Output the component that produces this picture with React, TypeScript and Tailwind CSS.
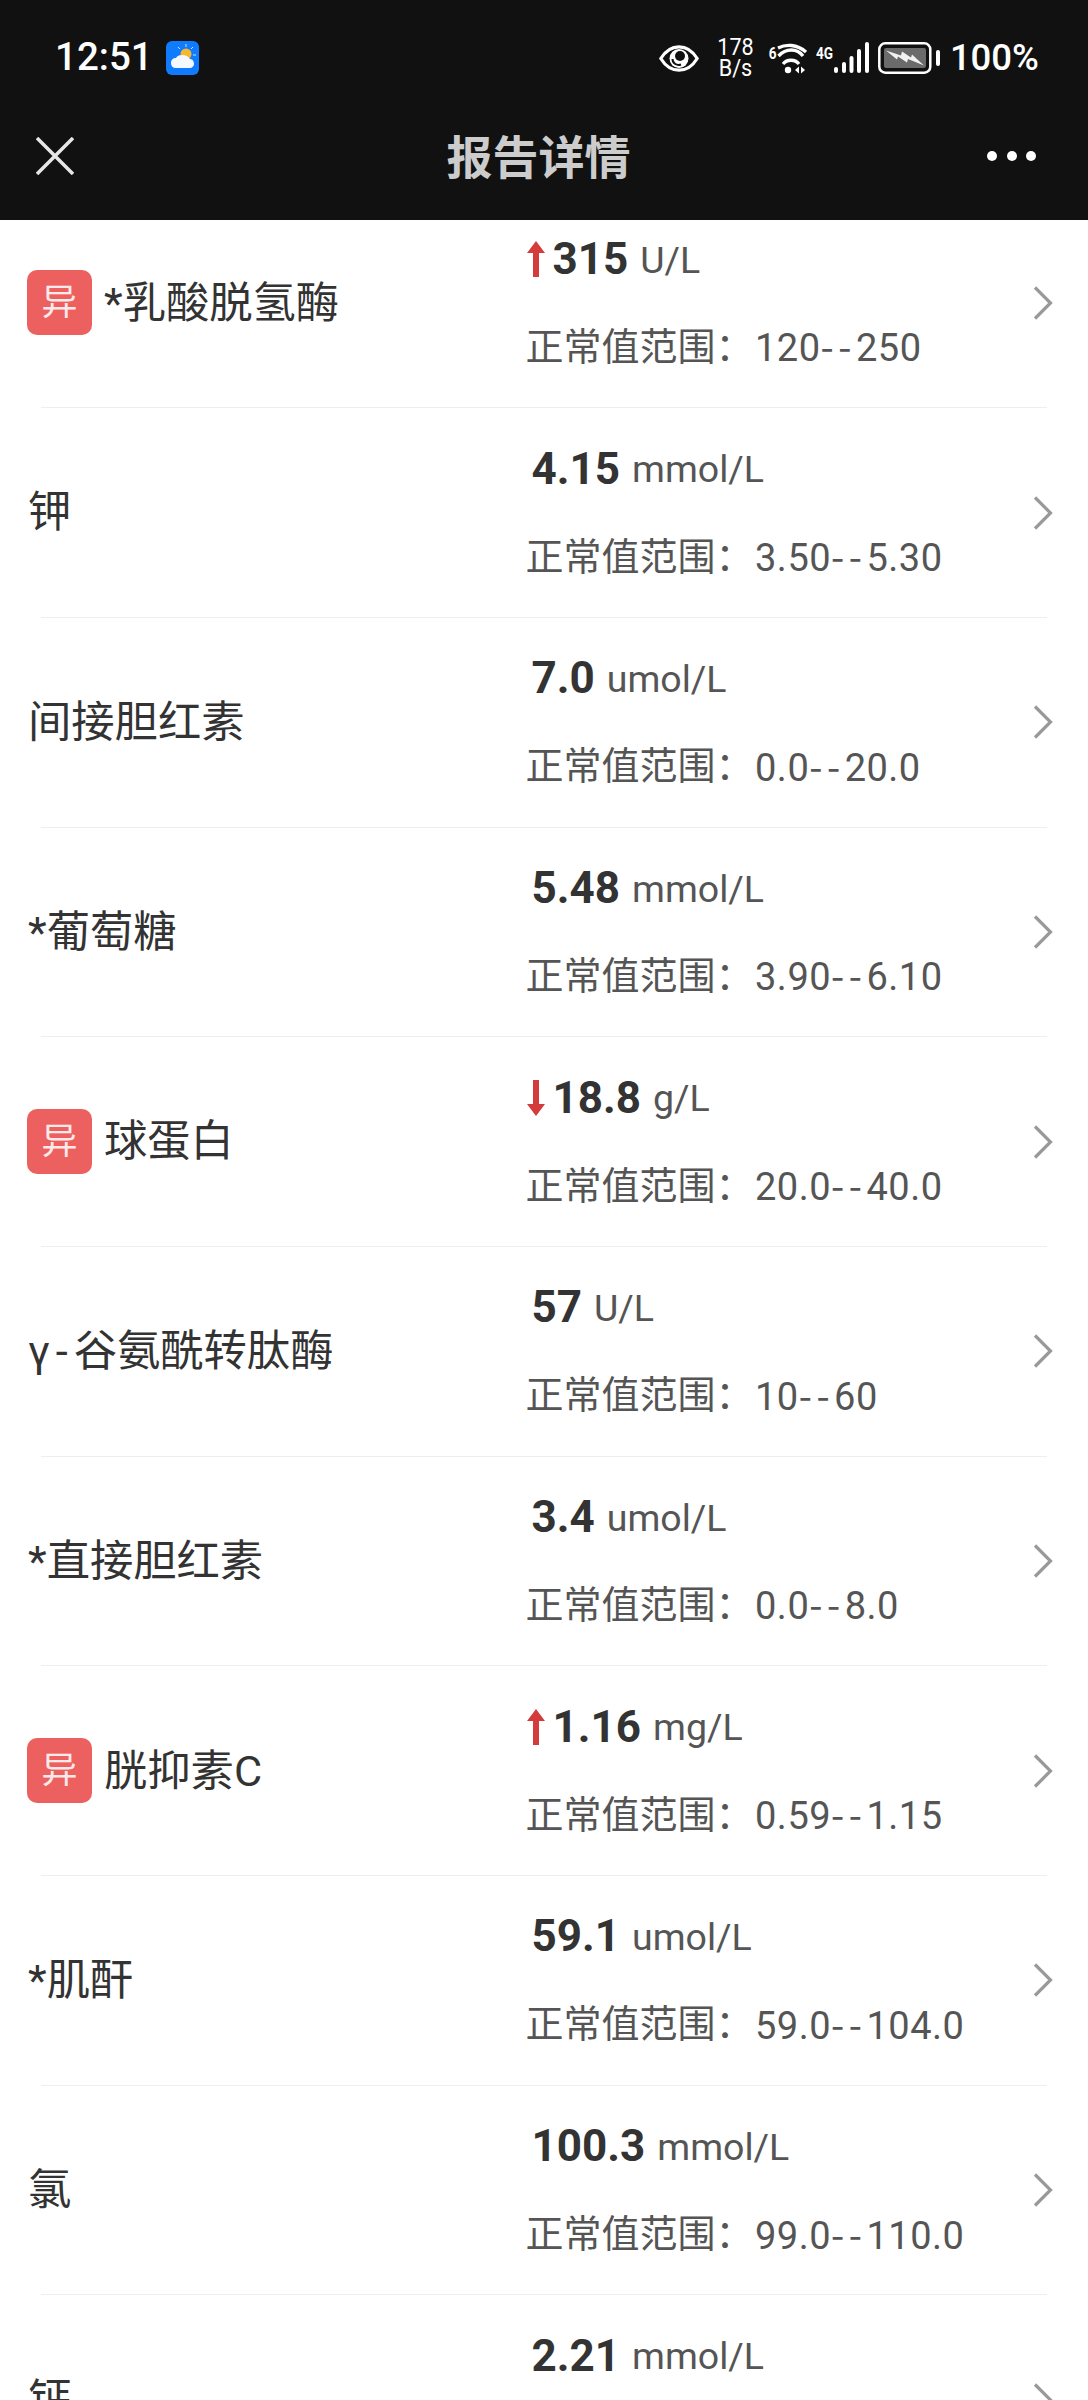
import React from "react";

type Row = { name: string; flag?: "up" | "down"; value: string; unit: string; range: string };

const rows: Row[] = [
  { name: "*乳酸脱氢酶", flag: "up", value: "315", unit: "U/L", range: "120--250" },
  { name: "钾", value: "4.15", unit: "mmol/L", range: "3.50--5.30" },
  { name: "间接胆红素", value: "7.0", unit: "umol/L", range: "0.0--20.0" },
  { name: "*葡萄糖", value: "5.48", unit: "mmol/L", range: "3.90--6.10" },
  { name: "球蛋白", flag: "down", value: "18.8", unit: "g/L", range: "20.0--40.0" },
  { name: "γ-谷氨酰转肽酶", value: "57", unit: "U/L", range: "10--60" },
  { name: "*直接胆红素", value: "3.4", unit: "umol/L", range: "0.0--8.0" },
  { name: "胱抑素C", flag: "up", value: "1.16", unit: "mg/L", range: "0.59--1.15" },
  { name: "*肌酐", value: "59.1", unit: "umol/L", range: "59.0--104.0" },
  { name: "氯", value: "100.3", unit: "mmol/L", range: "99.0--110.0" },
  { name: "钙", value: "2.21", unit: "mmol/L", range: "2.11--2.52" },
];

function Arrow({ dir }: { dir: "up" | "down" }) {
  return (
    <svg width="18" height="36" viewBox="0 0 18 36" className={dir === "down" ? "rotate-180" : ""}>
      <path d="M9 0 L18 12 L12 12 L12 36 L6 36 L6 12 L0 12 Z" fill="#d43b3b" />
    </svg>
  );
}

function Chevron() {
  return (
    <svg width="20" height="34" viewBox="0 0 20 34" fill="none">
      <path d="M2 1.500 L17.500 17 L2 32.500" stroke="#999999" strokeWidth="3.200" />
    </svg>
  );
}

function RowName({ name }: { name: string }) {
  if (name.startsWith("γ-")) {
    return (
      <>
        <span className="tracking-[6px]">γ-</span>
        {name.slice(2)}
      </>
    );
  }
  return <>{name}</>;
}

function Range({ range }: { range: string }) {
  const [a, b] = range.split("--");
  return (
    <span className="ml-[1.500px] tracking-[0.500px]">
      {a}
      <span className="font-['Noto_Sans_CJK_SC'] tracking-[4.500px]">--</span>
      {b}
    </span>
  );
}

function ReportRow({ row }: { row: Row }) {
  return (
    <div>
      <div className="flex h-[208.7px] items-center pl-[27px] pr-[35px]">
        <div className="flex w-[498.500px] shrink-0 items-center">
          {row.flag && (
            <span className="mr-[12px] flex h-[65px] w-[65px] items-center justify-center rounded-[10px] bg-[#ec6060] text-[36px] text-[#fde9e9]">
              异
            </span>
          )}
          <span className={`pt-[1px] text-[43.300px] leading-none text-[#333333] ${row.flag ? "" : "pl-[1px]"}`}>
            <RowName name={row.name} />
          </span>
        </div>
        <div className="flex flex-1 flex-col gap-[28px]">
          <div className="flex h-[60px] items-center">
            {row.flag ? (
              <span className="mr-[8px] ml-[1px] flex">
                <Arrow dir={row.flag} />
              </span>
            ) : (
              <span className="w-[6px]" />
            )}
            <span className="text-[44px] font-bold leading-none text-[#333333]">{row.value}</span>
            <span className="ml-[12px] pt-[3px] text-[37.500px] leading-none text-[#555555]">{row.unit}</span>
          </div>
          <div className="flex h-[60px] items-center text-[38px] leading-none text-[#555555]">
            <span>正常值范围：</span>
            <Range range={row.range} />
          </div>
        </div>
        <Chevron />
      </div>
      <div className="mx-[41px] h-px bg-[#eeeeee]" />
    </div>
  );
}

function StatusBar() {
  return (
    <div className="flex h-[115px] items-center justify-between pl-[55px] pr-[49px] text-white">
      <div className="flex items-center gap-[13px]">
        <span className="text-[38.500px] font-medium leading-none">12:51</span>
        <svg width="33" height="34" viewBox="0 0 33 34">
          <rect width="33" height="34" rx="6" fill="#0f7bff" />
          <circle cx="20" cy="13" r="5.500" fill="#f5b82e" />
          <path d="M20 3v3M27 6l-2 2M30 14h-3M12 6l2 2" stroke="#cfe6ff" strokeWidth="1" />
          <path d="M10 27c-3 0-5-2-5-5s2-5 5-5c1-2 3-3 6-3 4 0 7 2 8 4 3 0 4 3 4 5s-2 4-4 4z" fill="#f4f8ff" />
        </svg>
      </div>
      <div className="flex items-center">
        <svg width="40" height="27" viewBox="0 0 40 27" fill="none" className="mt-[2px]">
          <path d="M1.800 13.500C7 5 13 1.800 20 1.800S33 5 38.200 13.500C33 22 27 25.200 20 25.200S7 22 1.800 13.500Z" stroke="white" strokeWidth="3.200" />
          <circle cx="20" cy="13.500" r="9.500" fill="white" />
          <path d="M13.500 14c0 4.500 4.500 7 8.500 5.500" stroke="#111111" strokeWidth="2" />
          <circle cx="21" cy="11" r="5" fill="#111111" />
        </svg>
        <div className="ml-[18px] flex w-[37px] scale-x-90 flex-col items-center text-[24px] leading-[21px]">
          <span>178</span>
          <span>B/s</span>
        </div>
        <span className="mb-[8px] ml-[14px] w-[8px] scale-x-80 text-[17px] font-bold leading-none">6</span>
        <svg width="30" height="34" viewBox="0 0 30 34" fill="none" className="ml-[1px]">
          <path d="M1 7C9 3 20 3 29 11" stroke="white" strokeWidth="3.300" />
          <path d="M1.500 15C9 7 20 7 26 15" stroke="white" strokeWidth="3.300" />
          <path d="M6 23c4-5 12-5 16 0" stroke="white" strokeWidth="3.300" />
          <circle cx="11" cy="29" r="3.200" fill="white" />
          <path d="M18 29l4-3.500v7zM24 25.500v7l4-3.500z" fill="white" />
        </svg>
        <span className="mb-[8px] ml-[9px] w-[17px] origin-left scale-x-80 text-[17px] font-bold leading-none">4G</span>
        <svg width="35" height="31" viewBox="0 0 35 31" fill="white" className="ml-[1px]">
          <rect x="0" y="25" width="4" height="6" rx="2" />
          <rect x="8" y="20" width="4" height="11" rx="2" />
          <rect x="15.500" y="14" width="4" height="17" rx="2" />
          <rect x="23" y="7" width="4" height="24" rx="2" />
          <rect x="31" y="0" width="4" height="31" rx="2" />
        </svg>
        <svg width="62" height="32" viewBox="0 0 62 32" fill="none" className="ml-[9px]">
          <rect x="1.300" y="1.300" width="51" height="29.400" rx="6" stroke="white" strokeWidth="2.500" />
          <rect x="6" y="6" width="42" height="20" rx="2" fill="#6b6b6b" />
          <path d="M8 8.500l15 5 1-4 9 6 1-3 12 11-16-6.500-1 3.500-9-6-1 3z" fill="#f2f2f2" />
          <rect x="58" y="8" width="4" height="16" rx="2" fill="white" />
        </svg>
        <span className="ml-[10px] mt-[1px] text-[36.500px] font-medium leading-none">100%</span>
      </div>
    </div>
  );
}

function NavBar() {
  return (
    <div className="flex h-[105px] items-start justify-between pl-[36px] pr-[52px] pt-[22px]">
      <svg width="38" height="38" viewBox="0 0 38 38" fill="none">
        <path d="M1 1L37 37M37 1L1 37" stroke="#e6e6e6" strokeWidth="3.500" />
      </svg>
      <span className="mt-[-2px] pl-[16px] text-[46px] font-bold leading-[46px] text-[#cccccc]">报告详情</span>
      <div className="mt-[14px] flex gap-[9.500px]">
        <span className="h-[10px] w-[10px] rounded-full bg-white" />
        <span className="h-[10px] w-[10px] rounded-full bg-white" />
        <span className="h-[10px] w-[10px] rounded-full bg-white" />
      </div>
    </div>
  );
}

export default function App() {
  return (
    <div className="flex h-[2400px] w-[1088px] flex-col overflow-hidden bg-white font-['Roboto','Noto_Sans_CJK_SC',sans-serif]">
      <header className="relative z-10 h-[220px] shrink-0 bg-[#111111]">
        <StatusBar />
        <NavBar />
      </header>
      <div className="-mt-[21.500px]">
        {rows.map((r) => (
          <ReportRow key={r.name} row={r} />
        ))}
      </div>
    </div>
  );
}
